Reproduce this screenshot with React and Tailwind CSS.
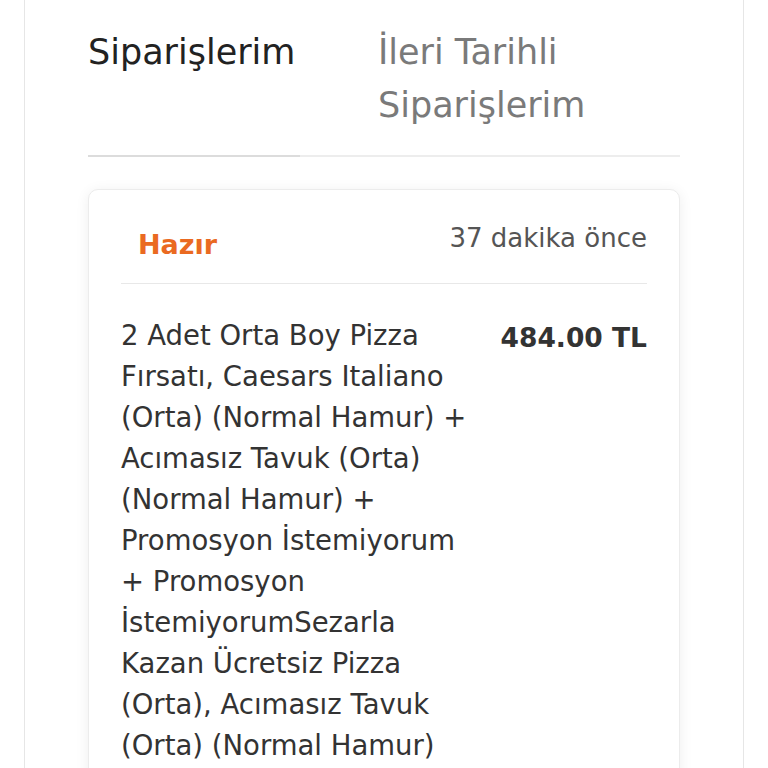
import React from "react";

const lines = [
  "2 Adet Orta Boy Pizza",
  "Fırsatı, Caesars Italiano",
  "(Orta) (Normal Hamur) +",
  "Acımasız Tavuk (Orta)",
  "(Normal Hamur) +",
  "Promosyon İstemiyorum",
  "+ Promosyon",
  "İstemiyorumSezarla",
  "Kazan Ücretsiz Pizza",
  "(Orta), Acımasız Tavuk",
  "(Orta) (Normal Hamur)",
];

export default function App() {
  return (
    <div className="h-[768px] w-[768px] overflow-hidden bg-white" style={{ fontFamily: '"DejaVu Sans", "Noto Sans", sans-serif' }}>
      <div className="ml-[24px] h-full w-[720px] border-x border-[#e6e6e6] px-[63px]">
        {/* Sekmeler */}
        <div className="flex pt-[26px]">
          <div className="w-[212px] border-b-2 border-[#dcdcdc] pb-[23px]">
            <div className="text-[35px] leading-[53px] text-[#222]">Siparişlerim</div>
          </div>
          <div className="flex-1 border-b-2 border-[#ededed] pb-[23px] pl-[78px]">
            <div className="text-[35px] leading-[53px] text-[#7a7a7a]">
              İleri Tarihli
              <br />
              Siparişlerim
            </div>
          </div>
        </div>

        {/* Sipariş kartı */}
        <div className="mt-[32px] rounded-[10px] border border-[#ececec] bg-white px-[32px] shadow-[0_2px_14px_rgba(0,0,0,0.07)]">
          <div className="flex items-center justify-between border-b border-[#e8e8e8] pb-[17px] pt-[30px]">
            <span className="mt-[5px] pl-[17px] text-[27px] font-bold text-[#ea6a21]">Hazır</span>
            <span className="-mt-[8px] text-[26px] text-[#555]">37 dakika önce</span>
          </div>
          <div className="flex justify-between pt-[31px] pb-[20px]">
            <div className="text-[27.5px] leading-[41px] text-[#333]">
              {lines.map((l) => (
                <div key={l} className="whitespace-nowrap">{l}</div>
              ))}
            </div>
            <div className="whitespace-nowrap pt-[2px] text-[26.5px] font-bold leading-[41px] text-[#333]">484.00 TL</div>
          </div>
        </div>
      </div>
    </div>
  );
}
